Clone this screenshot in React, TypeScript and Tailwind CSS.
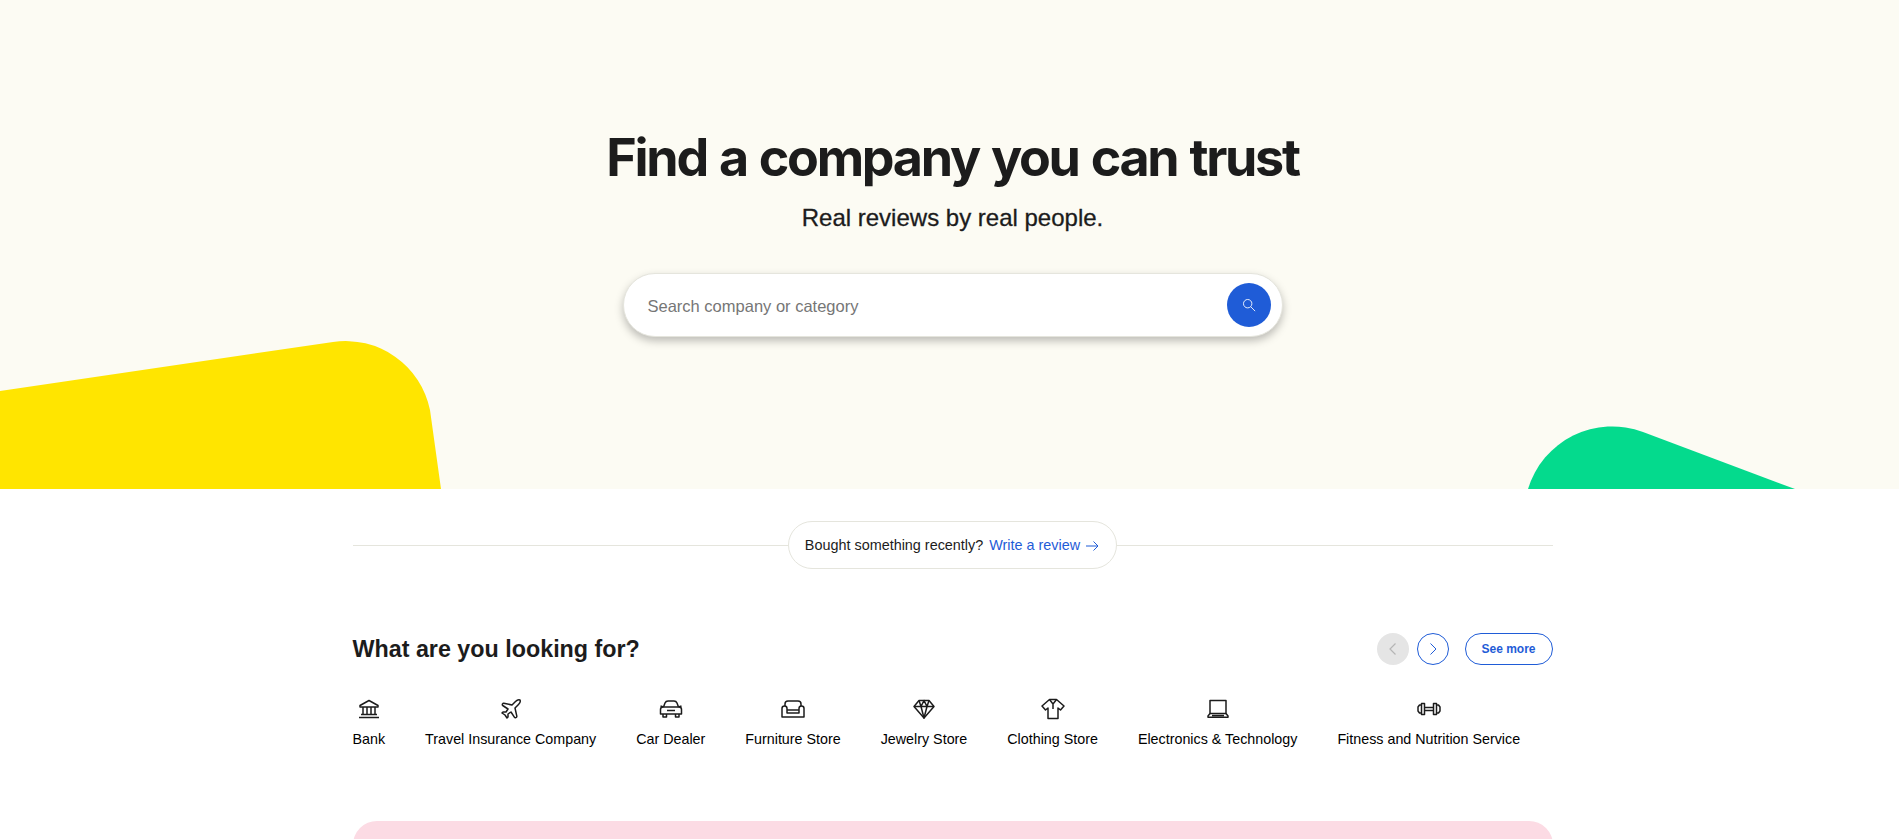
import React from 'react';

const ink = '#1c1c1c';

function Icon({ children }: { children: React.ReactNode }) {
  return (
    <svg className="w-6 h-6" viewBox="0 0 24 24" fill="none" stroke={ink} strokeWidth="1.5" strokeLinejoin="round">
      {children}
    </svg>
  );
}

const categories: { label: string; icon: React.ReactNode }[] = [
  {
    label: 'Bank',
    icon: (
      <Icon>
        <path d="M12 3.5 3 8.500V10h18V8.500z" />
        <path d="M6 10v7M10 10v7M14 10v7M18 10v7" />
        <path d="M4 17.500h16M2 20.500h20" />
      </Icon>
    ),
  },
  {
    label: 'Travel Insurance Company',
    icon: (
      <Icon>
        <path d="M17.800 19.200 16 11l3.500-3.500C21 6 21.500 4 21 3c-1-.5-3 0-4.500 1.500L13 8 4.800 6.200c-.5-.1-.9.1-1.100.5l-.3.5c-.2.5-.1 1 .3 1.300L9 12l-2 3H4l-1 1 3 2 2 3 1-1v-3l3-2 3.500 5.300c.3.4.8.5 1.300.3l.5-.2c.4-.3.6-.7.5-1.200z" />
      </Icon>
    ),
  },
  {
    label: 'Car Dealer',
    icon: (
      <Icon>
        <path d="M4.500 10 6 6c.5-1.200 1.500-2 3-2h6c1.500 0 2.500.8 3 2l1.500 4" />
        <path d="M4 10h16c1.500 0 2.500 1 2.500 2.500V17h-21v-4.500C1.500 11 2.500 10 4 10z" />
        <path d="M4 17v3h3.500v-3M16.500 17v3H20v-3M8 13.500h8M1.500 9l3 1M22.500 9l-3 1" />
      </Icon>
    ),
  },
  {
    label: 'Furniture Store',
    icon: (
      <Icon>
        <path d="M4 9V7c0-1.700 1.300-3 3-3h10c1.700 0 3 1.300 3 3v2" />
        <path d="M6 16v-4.500C6 10 5 9 3.500 9S1 10 1 11.500V20h22v-8.500C23 10 22 9 20.500 9S18 10 18 11.500V16z" />
        <path d="M6 13h12" />
      </Icon>
    ),
  },
  {
    label: 'Jewelry Store',
    icon: (
      <Icon>
        <path d="M7 3.500h10l5 6L12 21 2 9.500z" />
        <path d="M2 9.500h20M7 3.500l2 6L12 21l3-11.500 2-6M9 9.500l3-6 3 6" />
      </Icon>
    ),
  },
  {
    label: 'Clothing Store',
    icon: (
      <Icon>
        <path d="M8.500 2.500h7L23 9l-3.500 4-2.500-2v10.500H7V11l-2.500 2L1 9z" />
        <path d="M8.500 2.500 12 7l3.500-4.500M12 7v5" />
      </Icon>
    ),
  },
  {
    label: 'Electronics & Technology',
    icon: (
      <Icon>
        <path d="M4 3.500h16v13H4z" />
        <path d="M4 16.500 2 19v1.250h20V19l-2-2.500M6 18.500h12" />
      </Icon>
    ),
  },
  {
    label: 'Fitness and Nutrition Service',
    icon: (
      <Icon>
        <path d="M4.500 6.500h3v11h-3zM16.500 6.500h3v11h-3z" />
        <path d="M4.500 8H2.500l-1.500 2v4l1.500 2h2M19.500 8h2l1.500 2v4l-1.500 2h-2M7.500 10.500h9M7.500 13.500h9" />
      </Icon>
    ),
  },
];

export default function App() {
  return (
    <div className="w-full h-screen overflow-hidden bg-white" style={{ fontFamily: '"Liberation Sans", Arial, sans-serif' }}>
      <div className="w-[1905px]">
        {/* Hero */}
        <section className="relative h-[489px] overflow-hidden bg-[#fcfbf3] flex flex-col items-center pt-[126px]">
          <svg className="absolute left-0 bottom-0 w-[450px] h-[160px]" viewBox="0 0 450 160">
            <path d="M0 62 L333 13 A86 86 0 0 1 430 81 L441 160 L0 160Z" fill="#ffe500" />
          </svg>
          <svg className="absolute left-[1500px] bottom-0 w-[320px] h-[79px]" viewBox="0 0 320 79">
            <path d="M28 79 A88 88 0 0 1 143 22 L295 79 Z" fill="#04da8d" />
          </svg>
          <h1
            className="text-[52px] leading-[64px] font-bold text-[#1c1c1c] tracking-[-2.3px] [word-spacing:2px]"
            style={{ fontFamily: 'Inter, sans-serif' }}
          >
            Find a company you can trust
          </h1>
          <p className="mt-[12px] text-[24px] leading-[32px] text-[#1c1c1c] [-webkit-text-stroke:0.3px_#1c1c1c]">
            Real reviews by real people.
          </p>
          <div className="relative mt-[39px] w-[660px] h-[64px] rounded-full bg-white border border-[#e5e5dd] shadow-[0_4px_8px_rgba(0,0,0,0.25)] flex items-center justify-between pl-6 pr-[11px]">
            <span className="text-[#767676] text-[16.5px] pt-[2px]">Search company or category</span>
            <span className="w-11 h-11 rounded-full bg-[#1f5cd7] flex items-center justify-center">
              <svg className="w-[14px] h-[14px]" viewBox="0 0 16 16" fill="none" stroke="white" strokeWidth="1">
                <circle cx="6.500" cy="6.500" r="4.800" />
                <path d="M10 10l5 5" />
              </svg>
            </span>
          </div>
        </section>

        <main className="w-[1200px] mx-auto">
          {/* Write a review */}
          <div className="flex items-center mt-[32px]">
            <div className="flex-1 h-px bg-[#e5e5dd]" />
            <div className="h-[48px] pl-[16px] pr-[17px] rounded-full border border-[#e5e5dd] flex items-center text-[14.4px] text-[#1c1c1c]">
              <span className="pt-[1px]">Bought something recently?</span>
              <span className="ml-[6px] pt-[1px] text-[#1f5cd7]">Write a review</span>
              <svg className="ml-[5px] w-[14px] h-[14px] mt-[1px]" viewBox="0 0 14 14" fill="none" stroke="#1f5cd7" strokeWidth="1">
                <path d="M1 7h12M8.500 2.500 13 7l-4.500 4.500" />
              </svg>
            </div>
            <div className="flex-1 h-px bg-[#e5e5dd]" />
          </div>

          {/* Categories */}
          <div className="flex items-center justify-between mt-[63px]">
            <h2 className="text-[23.3px] font-bold text-[#1c1c1c]">What are you looking for?</h2>
            <div className="flex items-center">
              <button className="w-8 h-8 rounded-full bg-[#e5e5e5] flex items-center justify-center">
                <svg className="w-4 h-4" viewBox="0 0 16 16" fill="none" stroke="#b5b5b5" strokeWidth="1.200">
                  <path d="M10.500 2.500 5 8l5.500 5.500" />
                </svg>
              </button>
              <button className="ml-2 w-8 h-8 rounded-full border border-[#1f5cd7] flex items-center justify-center">
                <svg className="w-4 h-4" viewBox="0 0 16 16" fill="none" stroke="#1f5cd7" strokeWidth="1">
                  <path d="M5.500 2.500 11 8l-5.500 5.500" />
                </svg>
              </button>
              <button className="ml-4 w-[88px] h-8 rounded-full border border-[#1f5cd7] text-[#1f5cd7] text-[12px] font-bold">
                See more
              </button>
            </div>
          </div>

          <div className="flex gap-[40px] mt-[30px]">
            {categories.map((c) => (
              <div key={c.label} className="flex flex-col items-center">
                {c.icon}
                <span className="mt-[8px] text-[14.3px] leading-[20px] text-black whitespace-nowrap">{c.label}</span>
              </div>
            ))}
          </div>

          {/* Pink banner */}
          <div className="mt-[72px] h-[200px] rounded-t-[24px] bg-[#fcdbe4]" />
        </main>
      </div>
    </div>
  );
}
